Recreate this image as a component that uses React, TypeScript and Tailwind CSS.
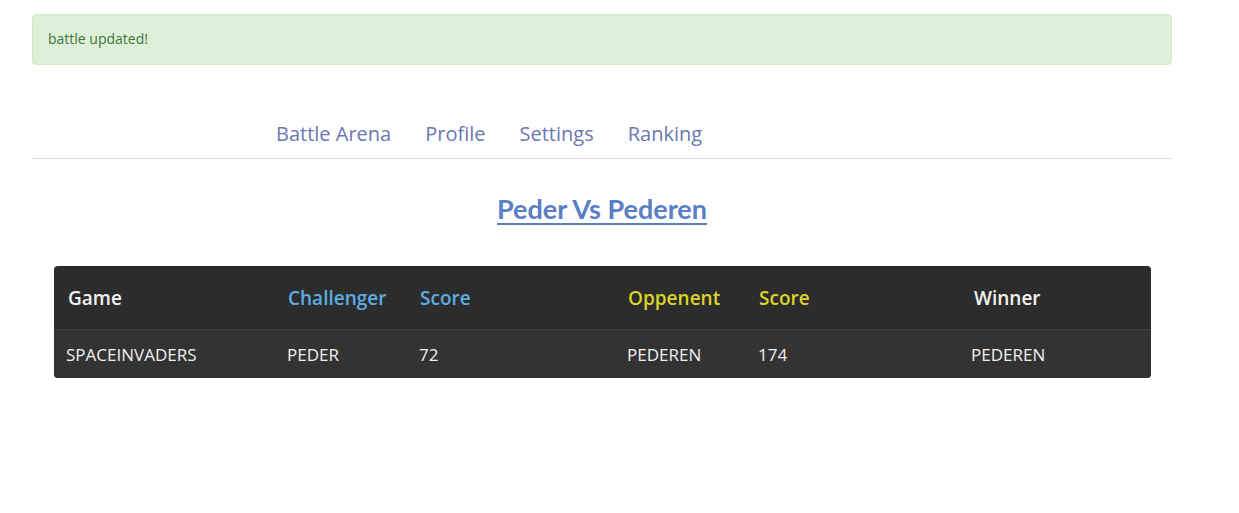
import React from "react";

const cols = [
  "w-[221px]",
  "w-[132px]",
  "w-[208px]",
  "w-[131px]",
  "w-[213px]",
  "w-[192px]",
];

export default function App() {
  return (
    <div className="min-h-[513px] bg-white pt-[14px] font-['Open_Sans',sans-serif]">
      <div className="ml-[32px] w-[1140px]">
        <div className="h-[51px] rounded-[4px] border border-[#d6e9c6] bg-[#dff0d8] px-[15px] py-[14px] text-[14px] leading-[20px] text-[#3c763d]">
          battle updated!
        </div>

        <div className="mt-[42px] flex h-[52px] items-end border-b border-[#dddddd] pl-[227px] pb-[10px]">
          {["Battle Arena", "Profile", "Settings", "Ranking"].map((l) => (
            <a
              key={l}
              className="px-[17px] text-[20px] leading-[28px] text-[#6a78b0]"
            >
              {l}
            </a>
          ))}
        </div>

        <div className="mt-[33px] flex justify-center">
          <h2 className="font-['Lato',sans-serif] text-[27px] font-bold leading-[34px] text-[#5b7fc4] underline decoration-[2px] underline-offset-[4px]">
            Peder Vs Pederen
          </h2>
        </div>

        <div className="ml-[22px] mt-[40px] w-[1097px] overflow-hidden rounded-[4px] bg-[#2c2c2c]">
          <div className="flex h-[64px] items-center border-b border-[#3d3d3d] pt-[1px] text-[19px] font-semibold">
            <div className={`${cols[0]} pl-[14px] text-[#f2f2f2]`}>Game</div>
            <div className={`${cols[1]} pl-[13px] text-[#5dade2]`}>Challenger</div>
            <div className={`${cols[2]} pl-[13px] text-[#5dade2]`}>Score</div>
            <div className={`${cols[3]} pl-[13px] text-[#dcd32a]`}>Oppenent</div>
            <div className={`${cols[4]} pl-[13px] text-[#dcd32a]`}>Score</div>
            <div className={`${cols[5]} pl-[15px] text-[#f2f2f2]`}>Winner</div>
          </div>
          <div className="flex h-[48px] items-center bg-[#333333] pt-[1px] text-[17px] text-[#f0f0f0]">
            <div className={`${cols[0]} pl-[12px]`}>SPACEINVADERS</div>
            <div className={`${cols[1]} pl-[12px]`}>PEDER</div>
            <div className={`${cols[2]} pl-[12px]`}>72</div>
            <div className={`${cols[3]} pl-[12px]`}>PEDEREN</div>
            <div className={`${cols[4]} pl-[12px]`}>174</div>
            <div className={`${cols[5]} pl-[12px]`}>PEDEREN</div>
          </div>
        </div>
      </div>
    </div>
  );
}
